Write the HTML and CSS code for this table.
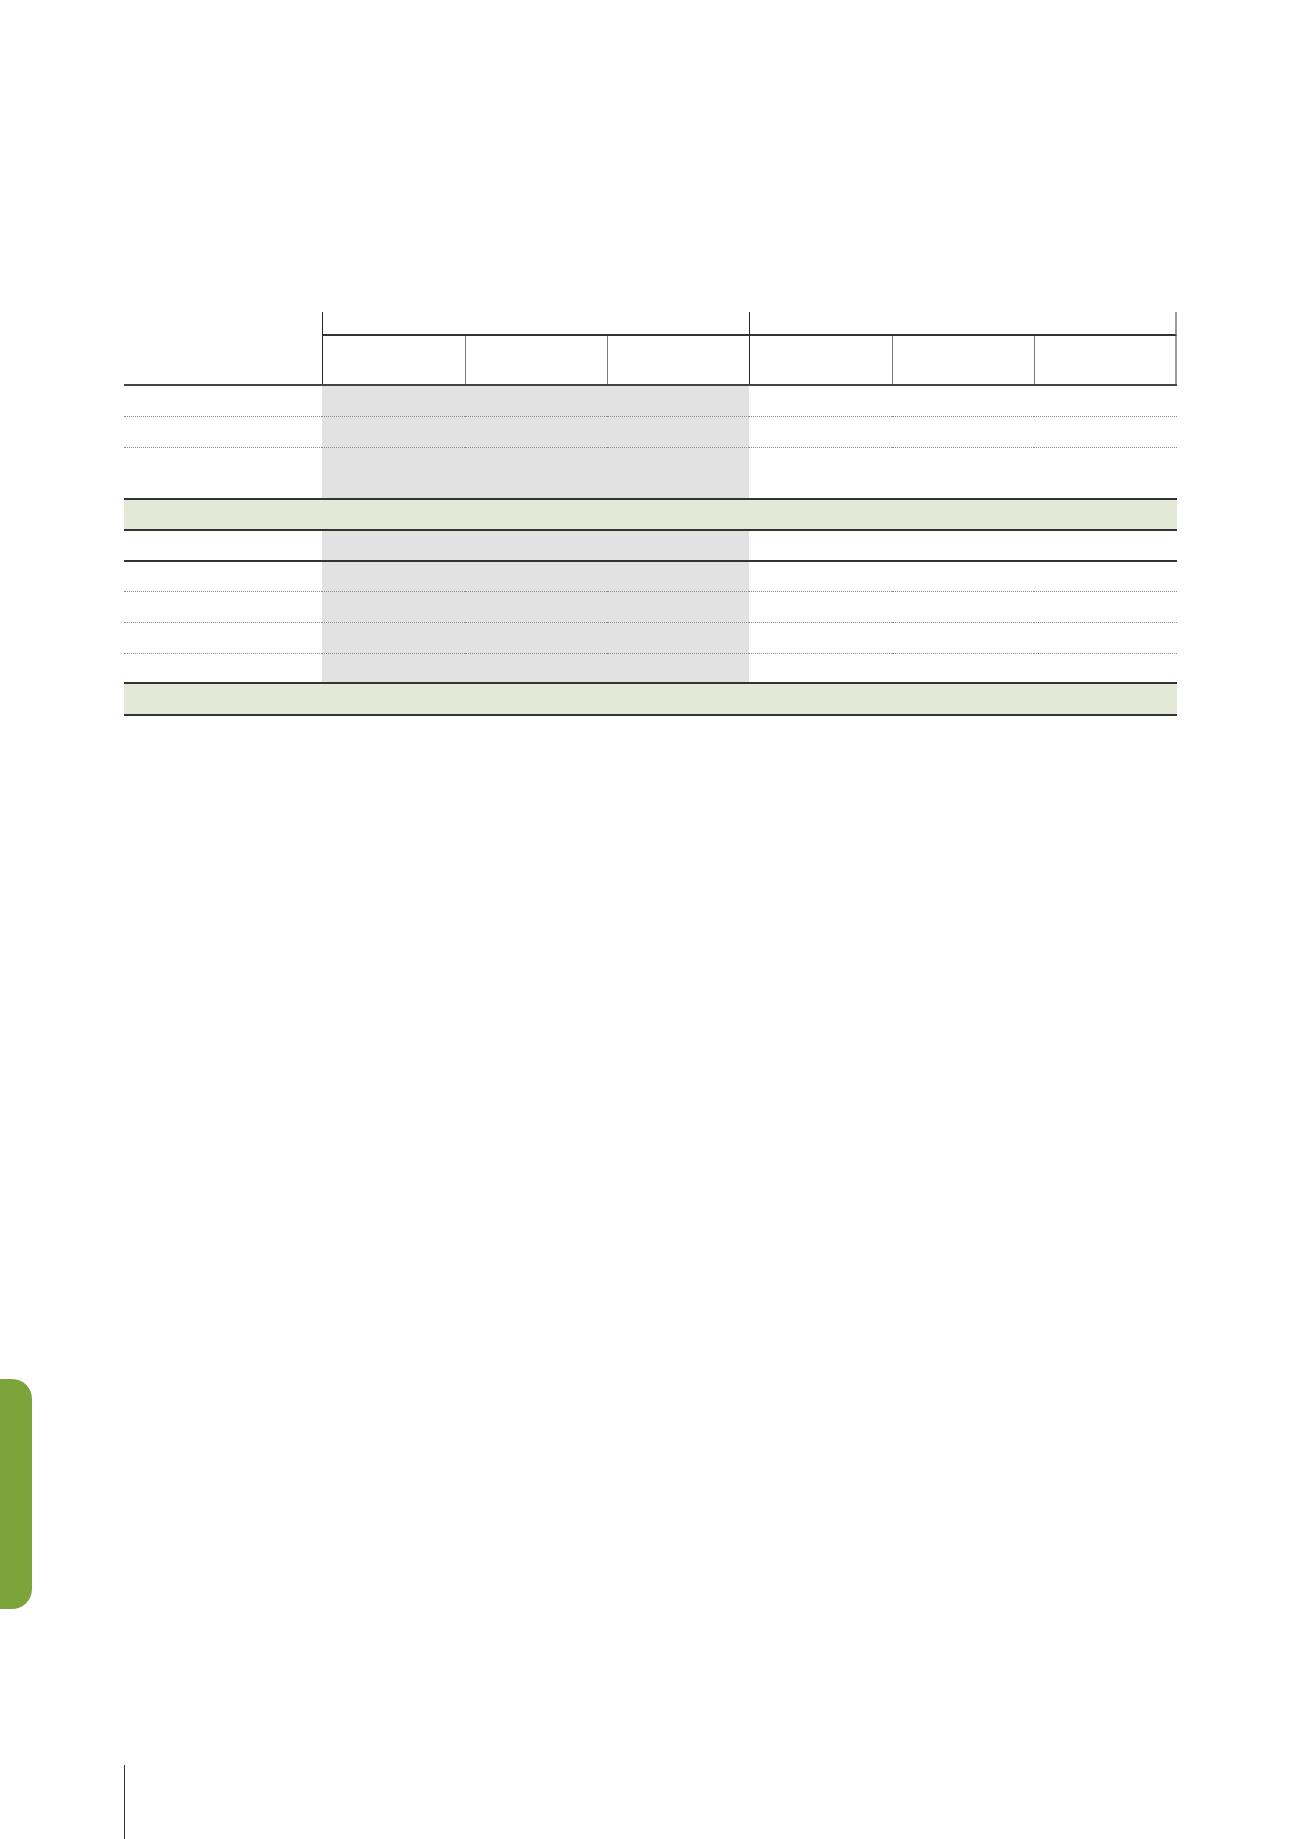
FILE: index.html
```html
<!DOCTYPE html>
<html lang="en">
<head>
<meta charset="utf-8">
<title>Table page</title>
<link rel="stylesheet" href="styles.css">
</head>
<body>
<div class="sheet">
  <div class="tbl">
    <div class="head1">
      <div class="h-blank"></div>
      <div class="grp grp-a"></div>
      <div class="grp grp-b"></div>
    </div>
    <div class="head2">
      <div class="h-blank"></div>
      <div class="hc dark"></div>
      <div class="hc"></div>
      <div class="hc"></div>
      <div class="hc dark"></div>
      <div class="hc"></div>
      <div class="hc last"></div>
    </div>

    <div class="row dotted h31">
      <div class="c"></div><div class="c g"></div><div class="c g"></div><div class="c g"></div><div class="c"></div><div class="c"></div><div class="c"></div>
    </div>
    <div class="row dotted h31">
      <div class="c"></div><div class="c g"></div><div class="c g"></div><div class="c g"></div><div class="c"></div><div class="c"></div><div class="c"></div>
    </div>
    <div class="row solid h52">
      <div class="c"></div><div class="c g"></div><div class="c g"></div><div class="c g"></div><div class="c"></div><div class="c"></div><div class="c"></div>
    </div>
    <div class="row solid total h31">
      <div class="c"></div><div class="c"></div><div class="c"></div><div class="c"></div><div class="c"></div><div class="c"></div><div class="c"></div>
    </div>
    <div class="row solid h31">
      <div class="c"></div><div class="c g"></div><div class="c g"></div><div class="c g"></div><div class="c"></div><div class="c"></div><div class="c"></div>
    </div>
    <div class="row dotted h30">
      <div class="c"></div><div class="c g"></div><div class="c g"></div><div class="c g"></div><div class="c"></div><div class="c"></div><div class="c"></div>
    </div>
    <div class="row dotted h31">
      <div class="c"></div><div class="c g"></div><div class="c g"></div><div class="c g"></div><div class="c"></div><div class="c"></div><div class="c"></div>
    </div>
    <div class="row dotted h31">
      <div class="c"></div><div class="c g"></div><div class="c g"></div><div class="c g"></div><div class="c"></div><div class="c"></div><div class="c"></div>
    </div>
    <div class="row solid h30">
      <div class="c"></div><div class="c g"></div><div class="c g"></div><div class="c g"></div><div class="c"></div><div class="c"></div><div class="c"></div>
    </div>
    <div class="row solid total h32">
      <div class="c"></div><div class="c"></div><div class="c"></div><div class="c"></div><div class="c"></div><div class="c"></div><div class="c"></div>
    </div>
  </div>

  <div class="side-tab"></div>
  <div class="foot-rule"></div>
</div>
</body>
</html>
```

FILE: styles.css
```css
*, *::before, *::after {
  box-sizing: border-box;
}

html, body {
  margin: 0;
  padding: 0;
  background: #ffffff;
}

body {
  font-family: "Liberation Sans", Arial, sans-serif;
}

.sheet {
  width: 1300px;
  height: 1839px;
  overflow: hidden;
}

.tbl {
  width: 1053px;
  margin: 312px 0 0 124px;
}

/* header level 1 */
.head1 {
  display: grid;
  grid-template-columns: 198px 427px 428px;
  height: 24px;
}

.grp {
  border-left: 1px solid #222222;
  border-bottom: 2px solid #333333;
}

.grp-b {
  border-right: 2px solid #9a9a9a;
}

/* header level 2 */
.head2 {
  display: grid;
  grid-template-columns: 198px 143px 142px 142px 143px 142px 143px;
  height: 50px;
  border-bottom: 2px solid #444444;
}

.hc {
  border-left: 1px solid #7a7a7a;
}

.hc.dark {
  border-left: 1px solid #222222;
}

.hc.last {
  border-right: 2px solid #9a9a9a;
}

/* body rows */
.row {
  display: grid;
  grid-template-columns: 198px 143px 142px 142px 143px 142px 143px;
}

.h30 { height: 30px; }
.h31 { height: 31px; }
.h32 { height: 32px; }
.h52 { height: 52px; }

.c {
  background: #ffffff;
}

.c.g {
  background: #e1e2e1;
}

.row.dotted .c {
  border-bottom: 1px dotted #8c8c8c;
}

.row.solid .c {
  border-bottom: 2px solid #333333;
}

.row.total .c {
  background: #e4e8d7;
}

/* page decorations */
.side-tab {
  width: 32px;
  height: 230px;
  margin-top: 663px;
  background: #7ba43b;
  border-radius: 0 20px 20px 0;
}

.foot-rule {
  width: 1px;
  height: 74px;
  margin: 156px 0 0 124px;
  background: #333333;
}
```
